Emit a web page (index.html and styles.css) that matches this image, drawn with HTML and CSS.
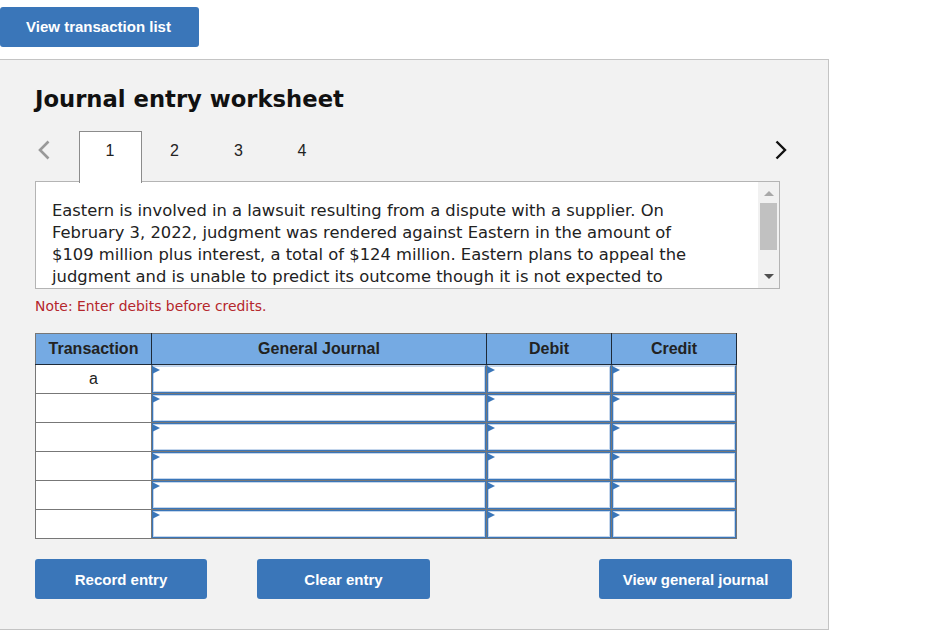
FILE: index.html
```html
<!DOCTYPE html>
<html lang="en">
<head>
    <meta charset="UTF-8">
    <title>Journal entry worksheet</title>
    <link rel="stylesheet" href="styles.css">
</head>
<body>
    <button class="btn btn-list">View transaction list</button>

    <div class="panel">
        <h1>Journal entry worksheet</h1>

        <div class="tabs">
            <svg class="chevron" width="14" height="20" viewBox="0 0 14 20"><path d="M11.500 1.500 3 10l8.500 8.500" fill="none" stroke="#999" stroke-width="2.600"/></svg>
            <div class="tab-list">
                <div class="tab active">1</div>
                <div class="tab">2</div>
                <div class="tab">3</div>
                <div class="tab">4</div>
            </div>
            <svg class="chevron" width="14" height="20" viewBox="0 0 14 20"><path d="M2.500 1.500 11 10l-8.500 8.500" fill="none" stroke="#111" stroke-width="2.400"/></svg>
        </div>

        <div class="scroll-box">
            <p class="scroll-text">Eastern is involved in a lawsuit resulting from a dispute with a supplier. On February 3, 2022, judgment was rendered against Eastern in the amount of $109 million plus interest, a total of $124 million. Eastern plans to appeal the judgment and is unable to predict its outcome though it is not expected to</p>
            <div class="scrollbar">
                <span class="arrow-up"></span>
                <span class="thumb"></span>
                <span class="arrow-down"></span>
            </div>
        </div>

        <p class="note">Note: Enter debits before credits.</p>

        <table class="journal">
            <colgroup>
                <col class="col-trans">
                <col class="col-general">
                <col class="col-amount">
                <col class="col-amount">
            </colgroup>
            <thead>
                <tr>
                    <th>Transaction</th>
                    <th>General Journal</th>
                    <th>Debit</th>
                    <th>Credit</th>
                </tr>
            </thead>
            <tbody>
                <tr><td class="trans">a</td><td><div class="entry"></div></td><td><div class="entry"></div></td><td><div class="entry"></div></td></tr>
                <tr><td class="trans"></td><td><div class="entry"></div></td><td><div class="entry"></div></td><td><div class="entry"></div></td></tr>
                <tr><td class="trans"></td><td><div class="entry"></div></td><td><div class="entry"></div></td><td><div class="entry"></div></td></tr>
                <tr><td class="trans"></td><td><div class="entry"></div></td><td><div class="entry"></div></td><td><div class="entry"></div></td></tr>
                <tr><td class="trans"></td><td><div class="entry"></div></td><td><div class="entry"></div></td><td><div class="entry"></div></td></tr>
                <tr><td class="trans"></td><td><div class="entry"></div></td><td><div class="entry"></div></td><td><div class="entry"></div></td></tr>
            </tbody>
        </table>

        <div class="actions">
            <button class="btn btn-record">Record entry</button>
            <button class="btn btn-clear">Clear entry</button>
            <button class="btn btn-view">View general journal</button>
        </div>
    </div>
</body>
</html>
```

FILE: styles.css
```css
body {
    margin: 0;
    padding-top: 7px;
    background-color: #fff;
    font-family: "Liberation Sans", Arial, sans-serif;
    color: #222;
}
.btn {
    display: block;
    height: 40px;
    padding: 0;
    border: none;
    border-radius: 3px;
    background-color: #3a76b9;
    color: #fff;
    font-family: "Liberation Sans", Arial, sans-serif;
    font-size: 15px;
    font-weight: bold;
    cursor: pointer;
}
.btn-list {
    width: 199px;
    padding: 0 2px 2px 0;
    margin-bottom: 12px;
}
.panel {
    box-sizing: border-box;
    width: 829px;
    height: 571px;
    padding: 0 36px 0 35px;
    background-color: #f2f2f2;
    border: 1px solid #c4c4c4;
    border-left: none;
}
h1 {
    margin: 0;
    padding-top: 24px;
    font-family: "DejaVu Sans", Verdana, sans-serif;
    font-size: 22.7px;
    line-height: 30px;
    font-weight: bold;
    color: #111;
}
.tabs {
    display: flex;
    justify-content: space-between;
    width: 753px;
    height: 50px;
    margin-top: 17px;
}
.chevron {
    flex: none;
    margin-top: 9px;
}
.chevron:first-child {
    margin-left: 2px;
}
.tab-list {
    display: flex;
    flex: 1;
    margin-left: 28px;
}
.tab {
    box-sizing: border-box;
    width: 64px;
    height: 51px;
    padding: 10px 1px 0 0;
    font-size: 16px;
    line-height: 20px;
    text-align: center;
    color: #222;
}
.tab:last-child {
    padding-right: 2px;
}
.tab.active {
    position: relative;
    z-index: 1;
    height: 52px;
    width: 63px;
    margin-right: 1px;
    padding-top: 9px;
    background-color: #fff;
    border: 1px solid #8c8c8c;
    border-bottom: none;
}
.scroll-box {
    display: flex;
    box-sizing: border-box;
    width: 745px;
    height: 108px;
    background-color: #fff;
    border: 1px solid #b4b4b4;
}
.scroll-text {
    flex: 1;
    margin: 0;
    padding: 18px 60px 0 16px;
    overflow: hidden;
    font-family: "DejaVu Sans", Verdana, sans-serif;
    font-size: 16.35px;
    line-height: 22px;
    color: #222;
}
.scrollbar {
    display: flex;
    flex-direction: column;
    align-items: center;
    flex: none;
    width: 21px;
    background-color: #f1f1f1;
}
.arrow-up {
    margin-top: 9px;
    border-left: 5px solid transparent;
    border-right: 5px solid transparent;
    border-bottom: 5px solid #a8a8a8;
}
.thumb {
    width: 17px;
    height: 47px;
    margin-top: 7px;
    background-color: #c1c1c1;
}
.arrow-down {
    margin-top: 24px;
    border-left: 5px solid transparent;
    border-right: 5px solid transparent;
    border-top: 5px solid #505050;
}
.note {
    margin: 8px 0 0;
    font-family: "DejaVu Sans", Verdana, sans-serif;
    font-size: 13.9px;
    line-height: 18px;
    color: #b5262c;
}
.journal {
    width: 702px;
    margin-top: 18px;
    table-layout: fixed;
    border-collapse: collapse;
    border: 1px solid #777;
    background-color: #fff;
}
.col-trans { width: 116px; }
.col-general { width: 335px; }
.col-amount { width: 125px; }
.journal th {
    height: 29px;
    padding: 0 0 1px;
    background-color: #75aae3;
    border-right: 1px solid #1e2a38;
    border-bottom: 1px solid #1e2a38;
    font-size: 16px;
    font-weight: bold;
    color: #222;
}
.journal td {
    padding: 0;
    border: 1px solid #777;
}
.trans {
    height: 28px;
    padding-bottom: 2px;
    text-align: center;
    font-size: 16px;
}
.entry {
    position: relative;
    box-sizing: border-box;
    height: 28px;
    border: 1px solid #3a76b9;
    box-shadow: inset 0 0 0 1px #c4d6ec;
}
tbody tr:first-child .entry {
    border-top-color: #c4d6ec;
}
.entry::before {
    content: "";
    position: absolute;
    left: -1px;
    top: 0;
    border-left: 8px solid #3a76b9;
    border-top: 4.500px solid transparent;
    border-bottom: 4.500px solid transparent;
}
.actions {
    display: flex;
    margin-top: 20px;
}
.btn-record { width: 172px; }
.btn-clear { width: 173px; margin-left: 50px; }
.btn-view { width: 193px; margin-left: auto; }
```
